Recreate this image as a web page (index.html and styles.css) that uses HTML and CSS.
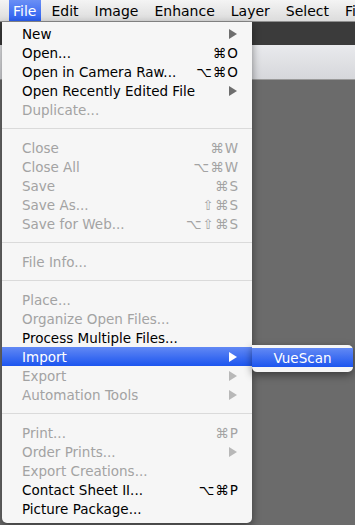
FILE: index.html
```html
<!DOCTYPE html>
<html>
<head>
<meta charset="utf-8">
<link rel="stylesheet" href="styles.css">
</head>
<body>
<div class="screen">
  <div class="menubar">
    <span class="mb-item active">File</span>
    <span class="mb-item">Edit</span>
    <span class="mb-item">Image</span>
    <span class="mb-item">Enhance</span>
    <span class="mb-item">Layer</span>
    <span class="mb-item">Select</span>
    <span class="mb-item">Filter</span>
  </div>
  <div class="workspace">
    <div class="tabbar"></div>
    <div class="optionsbar"></div>
    <div class="canvas"></div>
  </div>

  <div class="menu">
    <div class="row"><span class="label">New</span><span class="arrow"></span></div>
    <div class="row"><span class="label">Open...</span><span class="key">⌘O</span></div>
    <div class="row"><span class="label">Open in Camera Raw...</span><span class="key">⌥⌘O</span></div>
    <div class="row"><span class="label">Open Recently Edited File</span><span class="arrow"></span></div>
    <div class="row off"><span class="label">Duplicate...</span></div>
    <div class="sep"></div>
    <div class="row off"><span class="label">Close</span><span class="key">⌘W</span></div>
    <div class="row off"><span class="label">Close All</span><span class="key">⌥⌘W</span></div>
    <div class="row off"><span class="label">Save</span><span class="key">⌘S</span></div>
    <div class="row off"><span class="label">Save As...</span><span class="key">⇧⌘S</span></div>
    <div class="row off"><span class="label">Save for Web...</span><span class="key">⌥⇧⌘S</span></div>
    <div class="sep"></div>
    <div class="row off"><span class="label">File Info...</span></div>
    <div class="sep"></div>
    <div class="row off"><span class="label">Place...</span></div>
    <div class="row off"><span class="label">Organize Open Files...</span></div>
    <div class="row"><span class="label">Process Multiple Files...</span></div>
    <div class="row hl"><span class="label">Import</span><span class="arrow"></span></div>
    <div class="row off"><span class="label">Export</span><span class="arrow"></span></div>
    <div class="row off"><span class="label">Automation Tools</span><span class="arrow"></span></div>
    <div class="sep"></div>
    <div class="row off"><span class="label">Print...</span><span class="key">⌘P</span></div>
    <div class="row off"><span class="label">Order Prints...</span><span class="arrow"></span></div>
    <div class="row off"><span class="label">Export Creations...</span></div>
    <div class="row"><span class="label">Contact Sheet II...</span><span class="key">⌥⌘P</span></div>
    <div class="row"><span class="label">Picture Package...</span></div>
  </div>

  <div class="submenu">
    <div class="sub-row">VueScan</div>
  </div>
</div>
</body>
</html>
```

FILE: styles.css
```css
html, body {
  margin: 0;
  padding: 0;
}
body {
  width: 355px;
  height: 525px;
  overflow: hidden;
  font-family: "DejaVu Sans", "Lucida Grande", sans-serif;
}
.screen {
  position: relative;
  width: 355px;
  height: 525px;
  overflow: hidden;
  display: flex;
  flex-direction: column;
}
.menubar {
  height: 21px;
  flex: none;
  display: flex;
  align-items: stretch;
  padding-left: 9px;
  background: linear-gradient(#f4f4f4, #dcdcdc);
  border-bottom: 1px solid #8e8e8e;
  box-sizing: content-box;
  font-size: 14px;
  white-space: nowrap;
}
.mb-item {
  display: flex;
  align-items: center;
  padding: 0 6px 0 5px;
  color: #000;
  margin-right: 5px;
}
.mb-item.active {
  background: linear-gradient(#6a8ff5, #2a5ef0);
  color: #fff;
  padding: 0 5px 0 4px;
  margin-right: 5px;
}
.workspace {
  flex: 1;
  display: flex;
  flex-direction: column;
}
.tabbar {
  height: 23px;
  background: #3b3b3b;
  flex: none;
}
.optionsbar {
  height: 34px;
  flex: none;
  background: linear-gradient(#e9eaed, #d6d7db);
  border-bottom: 1px solid #9a9a9a;
}
.canvas {
  flex: 1;
  background: #6b6b6b;
}
.menu {
  position: absolute;
  left: 2px;
  top: 22px;
  width: 250px;
  padding: 2px 0 5px;
  background: #f6f6f6;
  border-radius: 0 0 5px 5px;
  box-shadow: 0 3px 8px rgba(0,0,0,0.45);
  font-size: 13.5px;
  color: #000;
}
.row {
  height: 19px;
  display: flex;
  align-items: center;
  justify-content: space-between;
  padding: 0 14px 0 20px;
  white-space: nowrap;
}
.row.off {
  color: #a3a3a3;
}
.row.hl {
  background: linear-gradient(#6289f4, #1c55ef);
  color: #fff;
}
.key {
  letter-spacing: 1px;
  margin-right: -1px;
}
.arrow {
  width: 0;
  height: 0;
  border-top: 5px solid transparent;
  border-bottom: 5px solid transparent;
  border-left: 8px solid #6e6e6e;
  margin-right: 1px;
}
.row.off .arrow {
  border-left-color: #b8b8b8;
}
.row.hl .arrow {
  border-left-color: #fff;
}
.sep {
  height: 19px;
  display: flex;
  align-items: center;
}
.sep::before {
  content: "";
  flex: 1;
  height: 1px;
  background: #dadada;
}
.submenu {
  position: absolute;
  left: 252px;
  top: 345px;
  width: 101px;
  padding: 3px 0 5px;
  background: #f6f6f6;
  border-radius: 0 5px 5px 5px;
  box-shadow: 0 3px 8px rgba(0,0,0,0.45);
}
.sub-row {
  height: 19px;
  display: flex;
  align-items: center;
  justify-content: center;
  background: linear-gradient(#6289f4, #1c55ef);
  color: #fff;
  font-size: 13.5px;
}
```
